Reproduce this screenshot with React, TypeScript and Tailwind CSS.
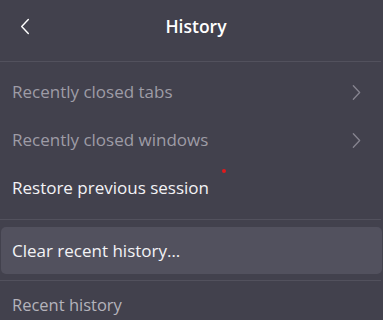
const font = { fontFamily: '"Open Sans", "Noto Sans", sans-serif' };

function Separator() {
  return <div className="h-px bg-[#52515d] mr-[2px]" />;
}

function Chevron({ dir, className }: { dir: 'left' | 'right'; className?: string }) {
  return (
    <svg viewBox="0 0 10 18" className={className} fill="none" stroke="currentColor" strokeWidth={1.5} strokeLinecap="round" strokeLinejoin="round">
      {dir === 'left' ? <path d="M8.5 1.5 1.5 9l7 7.5" /> : <path d="M1.5 1.5 8.5 9l-7 7.5" />}
    </svg>
  );
}

function NavRow({ label }: { label: string }) {
  return (
    <div className="flex items-center justify-between h-12 pl-3 pr-[22px] text-[#9e9ca6]">
      <span className="text-[17px]">{label}</span>
      <Chevron dir="right" className="w-[9px] h-[17px] text-[#86848f]" />
    </div>
  );
}

export default function App() {
  return (
    <div className="w-[383px] h-[320px] bg-[#42414d] overflow-hidden" style={font}>
      {/* Header */}
      <div className="relative flex items-center justify-center h-[61px] pl-[9px] pb-[8px]">
        <Chevron dir="left" className="absolute left-[20px] top-[18px] w-[10px] h-[17px] text-white" />
        <h1 className="text-[17.5px] font-semibold text-white">History</h1>
      </div>
      <Separator />

      <div className="pt-[6px]">
        <NavRow label="Recently closed tabs" />
        <NavRow label="Recently closed windows" />
        <div className="relative flex items-center h-12 pl-3 text-[#f3f3f6]">
          <span className="text-[17px]">Restore previous session</span>
          <span className="absolute left-[222px] top-[5px] w-[4px] h-[4px] rounded-full bg-[#e0191c]" />
        </div>
      </div>

      <div className="mt-[7px]">
        <Separator />
      </div>

      <div className="px-[1px] pt-[7px] pb-[6px]">
        <div className="flex items-center h-[47px] pl-[11px] rounded-[5px] bg-[#52515e] text-[#f3f3f6]">
          <span className="text-[17px]">Clear recent history…</span>
        </div>
      </div>

      <Separator />

      <div className="flex items-center h-[48px] pl-3 text-[#b4b3bb]">
        <span className="text-[16.5px]">Recent history</span>
      </div>
    </div>
  );
}
